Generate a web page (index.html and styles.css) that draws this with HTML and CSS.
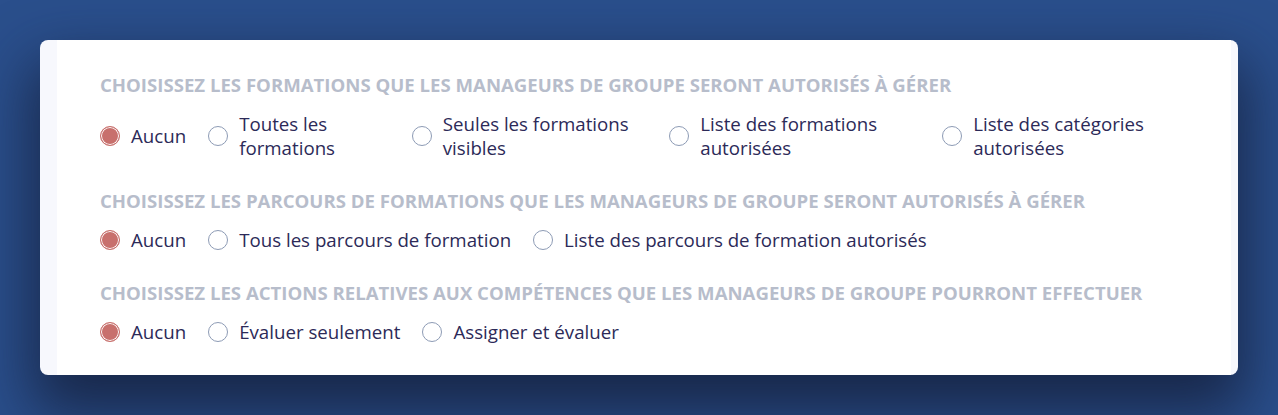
FILE: index.html
```html
<!DOCTYPE html>
<html lang="fr">
<head>
<meta charset="utf-8">
<link rel="stylesheet" href="styles.css">
</head>
<body>
<div class="card">
  <div class="inner">
    <section class="group">
      <h3 class="title">Choisissez les formations que les manageurs de groupe seront autorisés à gérer</h3>
      <div class="options">
        <label class="opt"><span class="radio checked"></span><span class="txt">Aucun</span></label>
        <label class="opt"><span class="radio"></span><span class="txt">Toutes les formations</span></label>
        <label class="opt"><span class="radio"></span><span class="txt">Seules les formations visibles</span></label>
        <label class="opt"><span class="radio"></span><span class="txt">Liste des formations autorisées</span></label>
        <label class="opt"><span class="radio"></span><span class="txt">Liste des catégories autorisées</span></label>
      </div>
    </section>
    <section class="group">
      <h3 class="title">Choisissez les parcours de formations que les manageurs de groupe seront autorisés à gérer</h3>
      <div class="options">
        <label class="opt"><span class="radio checked"></span><span class="txt">Aucun</span></label>
        <label class="opt"><span class="radio"></span><span class="txt">Tous les parcours de formation</span></label>
        <label class="opt"><span class="radio"></span><span class="txt">Liste des parcours de formation autorisés</span></label>
      </div>
    </section>
    <section class="group">
      <h3 class="title">Choisissez les actions relatives aux compétences que les manageurs de groupe pourront effectuer</h3>
      <div class="options">
        <label class="opt"><span class="radio checked"></span><span class="txt">Aucun</span></label>
        <label class="opt"><span class="radio"></span><span class="txt">Évaluer seulement</span></label>
        <label class="opt"><span class="radio"></span><span class="txt">Assigner et évaluer</span></label>
      </div>
    </section>
  </div>
</div>
</body>
</html>
```

FILE: styles.css
```css
html, body {
  margin: 0;
  padding: 0;
}
body {
  width: 1278px;
  height: 415px;
  overflow: hidden;
  background: #2a4f8c;
  font-family: "Open Sans", "Noto Sans", sans-serif;
  padding: 40px;
  box-sizing: border-box;
}
.card {
  background: #f7f8fd;
  border-radius: 8px;
  padding: 0 7px 0 17px;
  box-shadow: 0 30px 60px 8px rgba(20, 30, 58, 0.8);
}
.inner {
  background: #ffffff;
  padding: 33px 43px 31px 43px;
}
.group + .group {
  margin-top: 29px;
}
.title {
  margin: 0 0 15px 0;
  font-size: 18.6px;
  line-height: 24px;
  font-weight: 700;
  text-transform: uppercase;
  color: #b7bdcb;
  letter-spacing: 0;
}
.options {
  display: flex;
  align-items: center;
  gap: 22px;
}
.opt {
  display: flex;
  align-items: center;
  gap: 11px;
}
.radio {
  flex: none;
  width: 20px;
  height: 20px;
  border-radius: 50%;
  border: 1px solid #8d9bb5;
  box-sizing: border-box;
  background: #fff;
}
.radio.checked {
  border-color: #c8706d;
  background: #c8706d;
  box-shadow: inset 0 0 0 1px #fff;
}
.txt {
  font-size: 18.7px;
  line-height: 24px;
  color: #2c2a58;
}
```
